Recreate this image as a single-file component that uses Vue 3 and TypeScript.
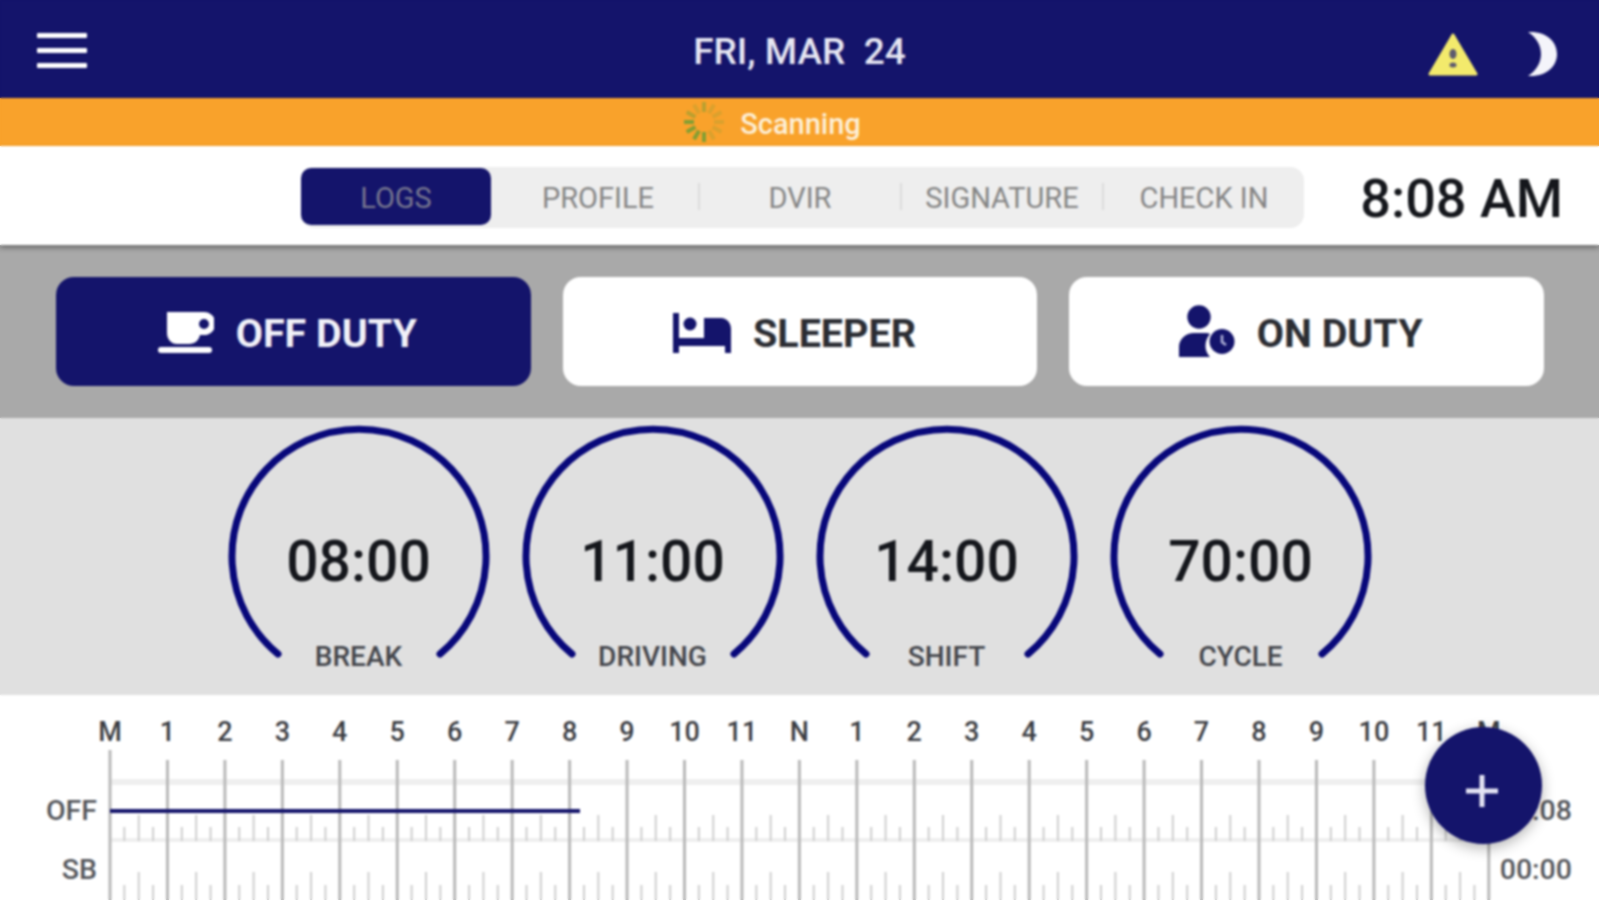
<script setup lang="ts">
const tabs = ['LOGS', 'PROFILE', 'DVIR', 'SIGNATURE', 'CHECK IN']
const gauges = [
  { time: '08:00', label: 'BREAK' },
  { time: '11:00', label: 'DRIVING' },
  { time: '14:00', label: 'SHIFT' },
  { time: '70:00', label: 'CYCLE' }
]

// spinner rays, the left and bottom ones are the strong green
const rays = Array.from({ length: 12 }, (_, i) => {
  const a = (i * Math.PI) / 6
  let o = 0.22
  if (i >= 3 && i <= 6) o = 0.85
  else if (i === 7 || i === 9) o = 0.45
  return {
    x1: 20 + Math.cos(a) * 10,
    y1: 21 + Math.sin(a) * 10,
    x2: 20 + Math.cos(a) * 20,
    y2: 21 + Math.sin(a) * 20,
    o
  }
})

// chart geometry, svg starts at y = 695 on the page
const X0 = 110
const STEP = 57.45
const hourLabels = ['M', '1', '2', '3', '4', '5', '6', '7', '8', '9', '10', '11', 'N', '1', '2', '3', '4', '5', '6', '7', '8', '9', '10', '11', 'M']
const hours = hourLabels.map((label, i) => ({ label, x: X0 + i * STEP }))
const ticks: { x: number; top: number; bottom: number }[] = []
for (let i = 0; i < 24; i++) {
  for (let q = 1; q < 4; q++) {
    const x = X0 + i * STEP + (q * STEP) / 4
    ticks.push({ x, top: q === 2 ? 120 : 132, bottom: 146 })
    ticks.push({ x, top: q === 2 ? 177 : 190, bottom: 205 })
  }
}
</script>

<template>
  <div class="app">
    <header class="topbar">
      <div class="burger"><i></i><i></i><i></i></div>
      <div class="date">FRI, MAR&nbsp; 24</div>
      <div class="topicons">
        <svg width="50" height="43" viewBox="0 0 50 43">
          <path d="M25 2 L48 41 H2 Z" fill="#f3ea6c" stroke="#f3ea6c" stroke-width="3" stroke-linejoin="round" />
          <ellipse cx="25" cy="21" rx="3.5" ry="5" fill="#5e5a6e" />
          <ellipse cx="25" cy="32" rx="3.5" ry="2.5" fill="#5e5a6e" />
        </svg>
        <svg width="30" height="46" viewBox="0 0 30 46">
          <path d="M1 1 C20 0 30 11 30 23 C30 35 20 46 1 45 C10 39 14 31 14 23 C14 15 10 7 1 1 Z" fill="#f4f4fa" />
        </svg>
      </div>
    </header>

    <div class="scanbar">
      <svg width="40" height="42" viewBox="0 0 40 42">
        <line
          v-for="(r, i) in rays"
          :key="i"
          :x1="r.x1"
          :y1="r.y1"
          :x2="r.x2"
          :y2="r.y2"
          stroke="#6f9f35"
          stroke-width="4"
          :opacity="r.o"
        />
      </svg>
      <span>Scanning</span>
    </div>

    <div class="tabrow">
      <div class="tabs">
        <div
          v-for="(t, i) in tabs"
          :key="t"
          class="tab"
          :class="{ active: i === 0, sep: i > 1 }"
        >{{ t }}</div>
      </div>
      <div class="clock">8:08 AM</div>
    </div>

    <div class="statusband">
      <button class="status on">
        <svg width="56" height="42" viewBox="0 0 56 42">
          <path d="M9 1 H46 A11.5 11.5 0 0 1 46 24 H42 C41 29 37 33 31 33 H19 C13 33 9 28 9 22 Z M46 8 A5 5 0 0 0 46 18 A5 5 0 0 0 46 8 Z" fill="#fff" fill-rule="evenodd" />
          <rect x="0" y="36" width="54" height="6" rx="3" fill="#fff" />
        </svg>
        <span>OFF DUTY</span>
      </button>
      <button class="status">
        <svg width="59" height="42" viewBox="0 0 59 42">
          <path d="M1 2 H7 V27 H32 V7 H49 C55 7 59 12 59 18 V42 H53 V35 H7 V42 H1 Z" fill="#14146b" />
          <circle cx="18" cy="13" r="6.5" fill="#14146b" />
        </svg>
        <span>SLEEPER</span>
      </button>
      <button class="status">
        <svg width="56" height="53" viewBox="0 0 56 53">
          <circle cx="20" cy="12" r="11.7" fill="#14146b" />
          <path d="M0 52 V42 C0 34 7 28 15 28 H26 C28 28 30 28 31 29 C25 36 25 46 31 52 Z" fill="#14146b" />
          <circle cx="43" cy="36.5" r="12.5" fill="#14146b" />
          <path d="M43 30 V37 L47 40" fill="none" stroke="#aeb0d6" stroke-width="2.5" />
        </svg>
        <span>ON DUTY</span>
      </button>
    </div>

    <div class="gaugeband">
      <div v-for="g in gauges" :key="g.label" class="gauge">
        <svg width="260" height="240" viewBox="0 0 260 240">
          <path
            d="M 49 226 A 127 127 0 1 1 211 226"
            fill="none"
            stroke="#08087a"
            stroke-width="7"
            stroke-linecap="round"
          />
        </svg>
        <div class="time">{{ g.time }}</div>
        <div class="glabel">{{ g.label }}</div>
      </div>
    </div>

    <div class="chart">
      <svg width="1599" height="205" viewBox="0 0 1599 205">
        <text
          v-for="h in hours"
          :key="h.x"
          class="hour"
          :x="h.x"
          y="46"
          text-anchor="middle"
        >{{ h.label }}</text>
        <line x1="110" y1="87" x2="1490" y2="87" stroke="#efefef" stroke-width="6" />
        <line x1="110" y1="145" x2="1490" y2="145" stroke="#efefef" stroke-width="4" />
        <line
          v-for="t in ticks"
          :key="`${t.x}-${t.top}`"
          :x1="t.x"
          :y1="t.top"
          :x2="t.x"
          :y2="t.bottom"
          stroke="#cfcfcf"
          stroke-width="2"
        />
        <line
          v-for="(h, i) in hours"
          :key="`v${h.x}`"
          :x1="h.x"
          :y1="i === 0 ? 55 : 65"
          :x2="h.x"
          y2="205"
          stroke="#b9b9b9"
          stroke-width="3"
        />
        <line x1="110" y1="116" x2="580" y2="116" stroke="#14146b" stroke-width="4" />
        <text class="rowlabel" x="97" y="125" text-anchor="end">OFF</text>
        <text class="rowlabel" x="97" y="184" text-anchor="end">SB</text>
        <text class="rowlabel" x="1572" y="125" text-anchor="end">08:08</text>
        <text class="rowlabel" x="1572" y="184" text-anchor="end">00:00</text>
      </svg>
      <button class="fab">
        <svg width="34" height="34" viewBox="0 0 34 34">
          <path d="M17 1 V33 M1 17 H33" stroke="#e4e4f4" stroke-width="5" />
        </svg>
      </button>
    </div>

    <!-- the reference is a soft upscaled capture, this softens everything under it -->
    <div class="soften"></div>
  </div>
</template>

<style scoped>
.app {
  position: relative;
  width: 1599px;
  height: 900px;
  overflow: hidden;
  background: #fff;
  font-family: Roboto, "Liberation Sans", sans-serif;
}
.soften {
  position: absolute;
  inset: 0;
  pointer-events: none;
  backdrop-filter: blur(1px);
}

.topbar {
  height: 98px;
  box-sizing: border-box;
  background: #14146b;
  display: grid;
  grid-template-columns: 1fr auto 1fr;
  align-items: center;
  padding: 0 42px;
}
.burger {
  width: 50px;
  margin: 3px 0 0 -5px;
  display: flex;
  flex-direction: column;
  gap: 10px;
}
.burger i {
  display: block;
  height: 5px;
  background: #fff;
  border-radius: 1px;
}
.date {
  margin-top: 5px;
  color: #e6e6f2;
  font-size: 37px;
  font-weight: 500;
}
.topicons {
  display: flex;
  justify-content: flex-end;
  align-items: center;
  gap: 49px;
  margin-top: 10px;
}

.scanbar {
  height: 48px;
  background: #f9a22b;
  display: flex;
  align-items: center;
  justify-content: center;
  gap: 16px;
  color: #fdf0d8;
  font-size: 29px;
  font-weight: 500;
  padding-right: 54px;
}
.scanbar span {
  margin-top: 3px;
}

.tabrow {
  height: 99px;
  box-sizing: border-box;
  background: #fff;
  box-shadow: 0 3px 5px rgba(0, 0, 0, 0.35);
  position: relative;
  display: flex;
  align-items: flex-start;
  padding: 21px 36px 0 301px;
}
.tabs {
  width: 1003px;
  height: 61px;
  display: flex;
  background: #eeeeee;
  border-radius: 14px;
}
.tab {
  flex: none;
  width: 202px;
  position: relative;
  margin: 1px 0 3px;
  padding-top: 2px;
  box-sizing: border-box;
  display: flex;
  align-items: center;
  justify-content: center;
  color: #858585;
  font-size: 29px;
  border-radius: 10px;
}
.tab.active {
  background: #14146b;
  color: #77778f;
  width: 190px;
  margin-right: 6px;
}
.tab.sep::before {
  content: "";
  position: absolute;
  left: -1px;
  top: 15px;
  bottom: 15px;
  width: 2px;
  background: #dcdcdc;
}
.clock {
  margin-left: auto;
  font-size: 54px;
  font-weight: 500;
  color: #15171c;
}

.statusband {
  height: 173px;
  box-sizing: border-box;
  background: #a9a9a9;
  padding: 32px 55px 32px 56px;
  display: flex;
  gap: 32px;
}
.status {
  flex: 1;
  border: none;
  border-radius: 18px;
  background: #fff;
  display: flex;
  align-items: center;
  justify-content: center;
  gap: 22px;
  font-family: inherit;
  font-size: 39.5px;
  font-weight: 700;
  color: #2b2d33;
  padding: 0 12px 0 0;
}
.status span {
  margin-top: 3px;
}
.status.on {
  background: #14146b;
  color: #f1f1f8;
}

.gaugeband {
  height: 277px;
  background: #e0e0e0;
  display: flex;
  justify-content: center;
  gap: 34px;
  padding-top: 10px;
  box-sizing: border-box;
}
.gauge {
  position: relative;
  width: 260px;
  height: 260px;
}
.gauge svg {
  overflow: visible;
}
.time {
  position: absolute;
  left: 0;
  right: 0;
  top: 100px;
  text-align: center;
  font-size: 57px;
  font-weight: 500;
  color: #15171c;
}
.glabel {
  position: absolute;
  left: 0;
  right: 0;
  top: 212px;
  text-align: center;
  font-size: 28px;
  font-weight: 500;
  color: #44464c;
}

.chart {
  position: relative;
  height: 205px;
}
.chart > svg {
  display: block;
}
.hour {
  font-size: 27px;
  font-weight: 500;
  fill: #3c3e44;
}
.rowlabel {
  font-size: 28.5px;
  font-weight: 500;
  fill: #55575c;
}
.fab {
  position: absolute;
  left: 1425px;
  top: 32px;
  width: 117px;
  height: 117px;
  border: none;
  border-radius: 50%;
  background: #14146b;
  box-shadow: 0 4px 14px rgba(0, 0, 0, 0.3);
  display: flex;
  align-items: center;
  justify-content: center;
  padding: 0 4px 0 0;
}
.fab svg {
  margin-top: 10px;
}
</style>
